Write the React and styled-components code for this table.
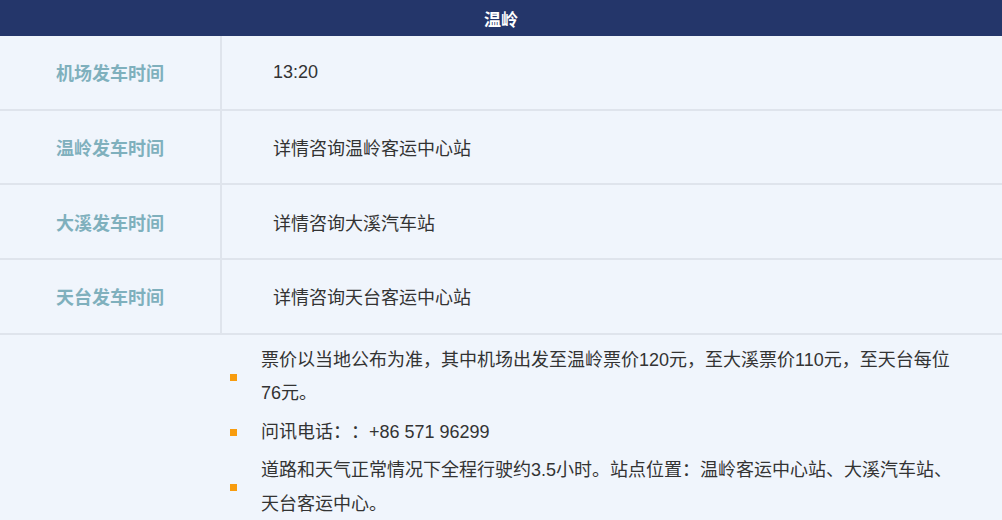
import React from "react";
import styled, { createGlobalStyle } from "styled-components";

const GlobalStyle = createGlobalStyle`
  html, body {
    margin: 0;
    padding: 0;
    background: #f0f5fc;
  }
  body {
    font-family: "Liberation Sans", Arial, "Noto Sans CJK SC", sans-serif;
    text-spacing-trim: space-all;
  }
`;

const Wrapper = styled.div`
  width: 1002px;
  background: #f0f5fc;
  color: #333333;
  text-spacing-trim: space-all;
`;

const TitleBar = styled.div`
  height: 36px;
  background: #24366a;
  color: #ffffff;
  font-size: 17px;
  font-weight: bold;
  display: flex;
  align-items: center;
  justify-content: center;
`;

const Row = styled.div`
  display: flex;
  height: 74.67px;
  box-sizing: border-box;
  border-bottom: 2px solid #dfe4ec;
`;

const Label = styled.div`
  width: 220px;
  flex-shrink: 0;
  border-right: 2px solid #dfe4ec;
  display: flex;
  align-items: center;
  justify-content: center;
  color: #7fb0bd;
  font-size: 18px;
  font-weight: bold;
`;

const Value = styled.div`
  flex: 1;
  display: flex;
  align-items: center;
  padding-left: 51px;
  font-size: 18px;
  color: #333333;
`;

const Notes = styled.ul`
  list-style: none;
  margin: 0;
  padding: 9px 44px 0 230px;
`;

const Note = styled.li`
  display: flex;
  align-items: center;
  gap: 24px;
  font-size: 18px;
  line-height: 33.5px;
  color: #333333;
  margin-bottom: 5px;
`;

const Bullet = styled.span`
  width: 7px;
  height: 7px;
  flex-shrink: 0;
  background: #f89c0e;
`;

const NoteText = styled.span`
  flex: 1;
`;

const schedule = [
  { label: "机场发车时间", value: "13:20" },
  { label: "温岭发车时间", value: "详情咨询温岭客运中心站" },
  { label: "大溪发车时间", value: "详情咨询大溪汽车站" },
  { label: "天台发车时间", value: "详情咨询天台客运中心站" },
];

const notes = [
  "票价以当地公布为准，其中机场出发至温岭票价120元，至大溪票价110元，至天台每位76元。",
  "问讯电话：：+86 571 96299",
  "道路和天气正常情况下全程行驶约3.5小时。站点位置：温岭客运中心站、大溪汽车站、天台客运中心。",
];

export default function App() {
  return (
    <Wrapper lang="zh-CN">
      <GlobalStyle />
      <TitleBar>温岭</TitleBar>
      {schedule.map((item) => (
        <Row key={item.label}>
          <Label>{item.label}</Label>
          <Value>{item.value}</Value>
        </Row>
      ))}
      <Notes>
        {notes.map((text) => (
          <Note key={text}>
            <Bullet />
            <NoteText>{text}</NoteText>
          </Note>
        ))}
      </Notes>
    </Wrapper>
  );
}
